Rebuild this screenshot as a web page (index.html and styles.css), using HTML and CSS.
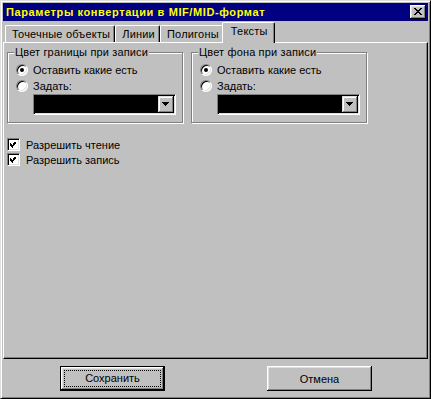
FILE: index.html
```html
<!DOCTYPE html>
<html lang="ru">
<head>
    <meta charset="UTF-8">
    <title>Параметры конвертации в MIF/MID-формат</title>
    <link rel="stylesheet" href="styles.css">
</head>
<body>
    <div class="window">
        <div class="titlebar">
            <span class="title">Параметры конвертации в MIF/MID-формат</span>
            <button class="close" type="button">
                <svg width="8" height="7" viewBox="0 0 8 7" shape-rendering="crispEdges">
                    <path d="M0 0h2v1H0z M6 0h2v1H6z M1 1h2v1H1z M5 1h2v1H5z M2 2h4v1H2z M3 3h2v1H3z M2 4h4v1H2z M1 5h2v1H1z M5 5h2v1H5z M0 6h2v1H0z M6 6h2v1H6z" fill="#000"/>
                </svg>
            </button>
        </div>

        <div class="tabs">
            <div class="tab">Точечные объекты</div>
            <div class="tab">Линии</div>
            <div class="tab">Полигоны</div>
            <div class="tab active">Тексты</div>
        </div>

        <div class="panel">
            <div class="groups">
                <fieldset class="group">
                    <legend>Цвет границы при записи</legend>
                    <label class="option"><span class="radio checked"></span>Оставить какие есть</label>
                    <label class="option"><span class="radio"></span>Задать:</label>
                    <div class="combo">
                        <span class="combo-value"></span>
                        <span class="combo-btn">
                            <svg width="7" height="4" viewBox="0 0 7 4" shape-rendering="crispEdges">
                                <path d="M0 0h7v1H0z M1 1h5v1H1z M2 2h3v1H2z M3 3h1v1H3z" fill="#000"/>
                            </svg>
                        </span>
                    </div>
                </fieldset>

                <fieldset class="group">
                    <legend>Цвет фона при записи</legend>
                    <label class="option"><span class="radio checked"></span>Оставить какие есть</label>
                    <label class="option"><span class="radio"></span>Задать:</label>
                    <div class="combo">
                        <span class="combo-value"></span>
                        <span class="combo-btn">
                            <svg width="7" height="4" viewBox="0 0 7 4" shape-rendering="crispEdges">
                                <path d="M0 0h7v1H0z M1 1h5v1H1z M2 2h3v1H2z M3 3h1v1H3z" fill="#000"/>
                            </svg>
                        </span>
                    </div>
                </fieldset>
            </div>

            <div class="checks">
                <label class="check-row">
                    <span class="checkbox">
                        <svg width="7" height="7" viewBox="0 0 7 7" shape-rendering="crispEdges">
                            <path d="M6 0h1v1H6z M5 1h2v1H5z M0 2h1v1H0z M4 2h3v1H4z M0 3h2v1H0z M3 3h3v1H3z M0 4h5v1H0z M1 5h3v1H1z M2 6h1v1H2z" fill="#000"/>
                        </svg>
                    </span>Разрешить чтение
                </label>
                <label class="check-row">
                    <span class="checkbox">
                        <svg width="7" height="7" viewBox="0 0 7 7" shape-rendering="crispEdges">
                            <path d="M6 0h1v1H6z M5 1h2v1H5z M0 2h1v1H0z M4 2h3v1H4z M0 3h2v1H0z M3 3h3v1H3z M0 4h5v1H0z M1 5h3v1H1z M2 6h1v1H2z" fill="#000"/>
                        </svg>
                    </span>Разрешить запись
                </label>
            </div>
        </div>

        <div class="footer">
            <button class="btn default" type="button"><span class="focus">Сохранить</span></button>
            <button class="btn" type="button">Отмена</button>
        </div>
    </div>
</body>
</html>
```

FILE: styles.css
```css
* {
    box-sizing: border-box;
}

body {
    margin: 0;
    background-color: #c0c0c0;
    font-family: "Liberation Sans", Arial, sans-serif;
    font-size: 11px;
    color: #000;
}

/* Window frame */
.window {
    width: 431px;
    height: 399px;
    display: flex;
    flex-direction: column;
    padding: 2px;
    border: 1px solid;
    border-color: #dfdfdf #000 #000 #dfdfdf;
    box-shadow: inset 1px 1px #fff, inset -1px -1px #808080;
    background-color: #c0c0c0;
}

.titlebar {
    height: 18px;
    display: flex;
    align-items: center;
    justify-content: space-between;
    padding: 0 2px 0 3px;
    background-color: #000080;
}

.title {
    color: #ffff00;
    font-weight: bold;
    font-size: 11px;
    letter-spacing: 0.6px;
}

.close {
    width: 16px;
    height: 14px;
    padding: 0 1px 1px 0;
    border: none;
    display: flex;
    align-items: center;
    justify-content: center;
    background-color: #c0c0c0;
    box-shadow: inset -1px -1px #000, inset 1px 1px #fff, inset -2px -2px #808080, inset 2px 2px #dfdfdf;
}

/* Tabs */
.tabs {
    height: 21px;
    margin-top: 1px;
    margin-bottom: -1px;
    padding-left: 2px;
    display: flex;
    align-items: flex-end;
    position: relative;
    z-index: 1;
}

.tab {
    height: 17px;
    margin-bottom: 1px;
    padding: 0 4px 0 6px;
    line-height: 16px;
    letter-spacing: 0.2px;
    white-space: nowrap;
    background-color: #c0c0c0;
    border: 1px solid;
    border-bottom: none;
    border-color: #fff #000 #000 #fff;
    border-radius: 2px 2px 0 0;
    box-shadow: inset -1px 0 #808080;
}

.tab.active {
    height: 21px;
    margin: 0 -2px;
    padding: 0 6px 0 8px;
    position: relative;
    z-index: 2;
}

.panel {
    flex: 1;
    padding: 3px;
    border: 1px solid;
    border-color: #fff #000 #000 #fff;
    box-shadow: inset -1px -1px #808080;
}

/* Group boxes */
.groups {
    display: flex;
    gap: 8px;
}

.group {
    width: 176px;
    min-width: 0;
    margin: 0;
    padding: 3px 8px 7px;
    border: 1px solid #808080;
    box-shadow: inset 1px 1px #fff, 1px 1px #fff;
}

.group legend {
    margin-left: -2px;
    padding: 0 1px;
    line-height: 13px;
    letter-spacing: 0.15px;
    background-color: #c0c0c0;
}

.option {
    height: 16px;
    display: flex;
    align-items: center;
}

.radio {
    width: 12px;
    height: 12px;
    margin-right: 5px;
    border-radius: 50%;
    border: 1px solid;
    border-color: #808080 #fff #fff #808080;
    background-color: #fff;
    box-shadow: inset 1px 1px #000, inset -1px -1px #dfdfdf;
    display: flex;
    align-items: center;
    justify-content: center;
}

.radio.checked::after {
    content: "";
    width: 4px;
    height: 4px;
    border-radius: 50%;
    background-color: #000;
}

.combo {
    width: 143px;
    height: 21px;
    margin-left: 17px;
    display: flex;
    border: 1px solid;
    border-color: #808080 #fff #fff #808080;
    box-shadow: inset 1px 1px #000, inset -1px -1px #dfdfdf;
    padding: 1px;
    background-color: #000;
}

.combo-value {
    flex: 1;
    background-color: #000;
}

.combo-btn {
    width: 16px;
    display: flex;
    align-items: center;
    justify-content: center;
    padding: 0 1px 1px 0;
    background-color: #c0c0c0;
    box-shadow: inset -1px -1px #000, inset 1px 1px #dfdfdf, inset -2px -2px #808080, inset 2px 2px #fff;
}

/* Checkboxes */
.checks {
    margin-top: 14px;
}

.check-row {
    height: 15px;
    display: flex;
    align-items: center;
}

.checkbox {
    width: 13px;
    height: 13px;
    margin-right: 6px;
    padding: 3px;
    border: 1px solid;
    border-color: #808080 #fff #fff #808080;
    background-color: #fff;
    box-shadow: inset 1px 1px #000, inset -1px -1px #dfdfdf;
    display: flex;
}

.checkbox svg {
    margin: -1px 0 0 -1px;
}

/* Dialog buttons */
.footer {
    display: flex;
    gap: 102px;
    padding: 7px 0 5px 57px;
}

.btn {
    width: 105px;
    height: 25px;
    padding: 0;
    border: none;
    font: inherit;
    color: #000;
    background-color: #c0c0c0;
    box-shadow: inset -1px -1px #000, inset 1px 1px #fff, inset -2px -2px #808080, inset 2px 2px #dfdfdf;
}

.btn.default {
    padding: 3px;
    border: 1px solid #000;
}

.focus {
    display: block;
    height: 17px;
    line-height: 15px;
    border: 1px dotted #000;
}
```
